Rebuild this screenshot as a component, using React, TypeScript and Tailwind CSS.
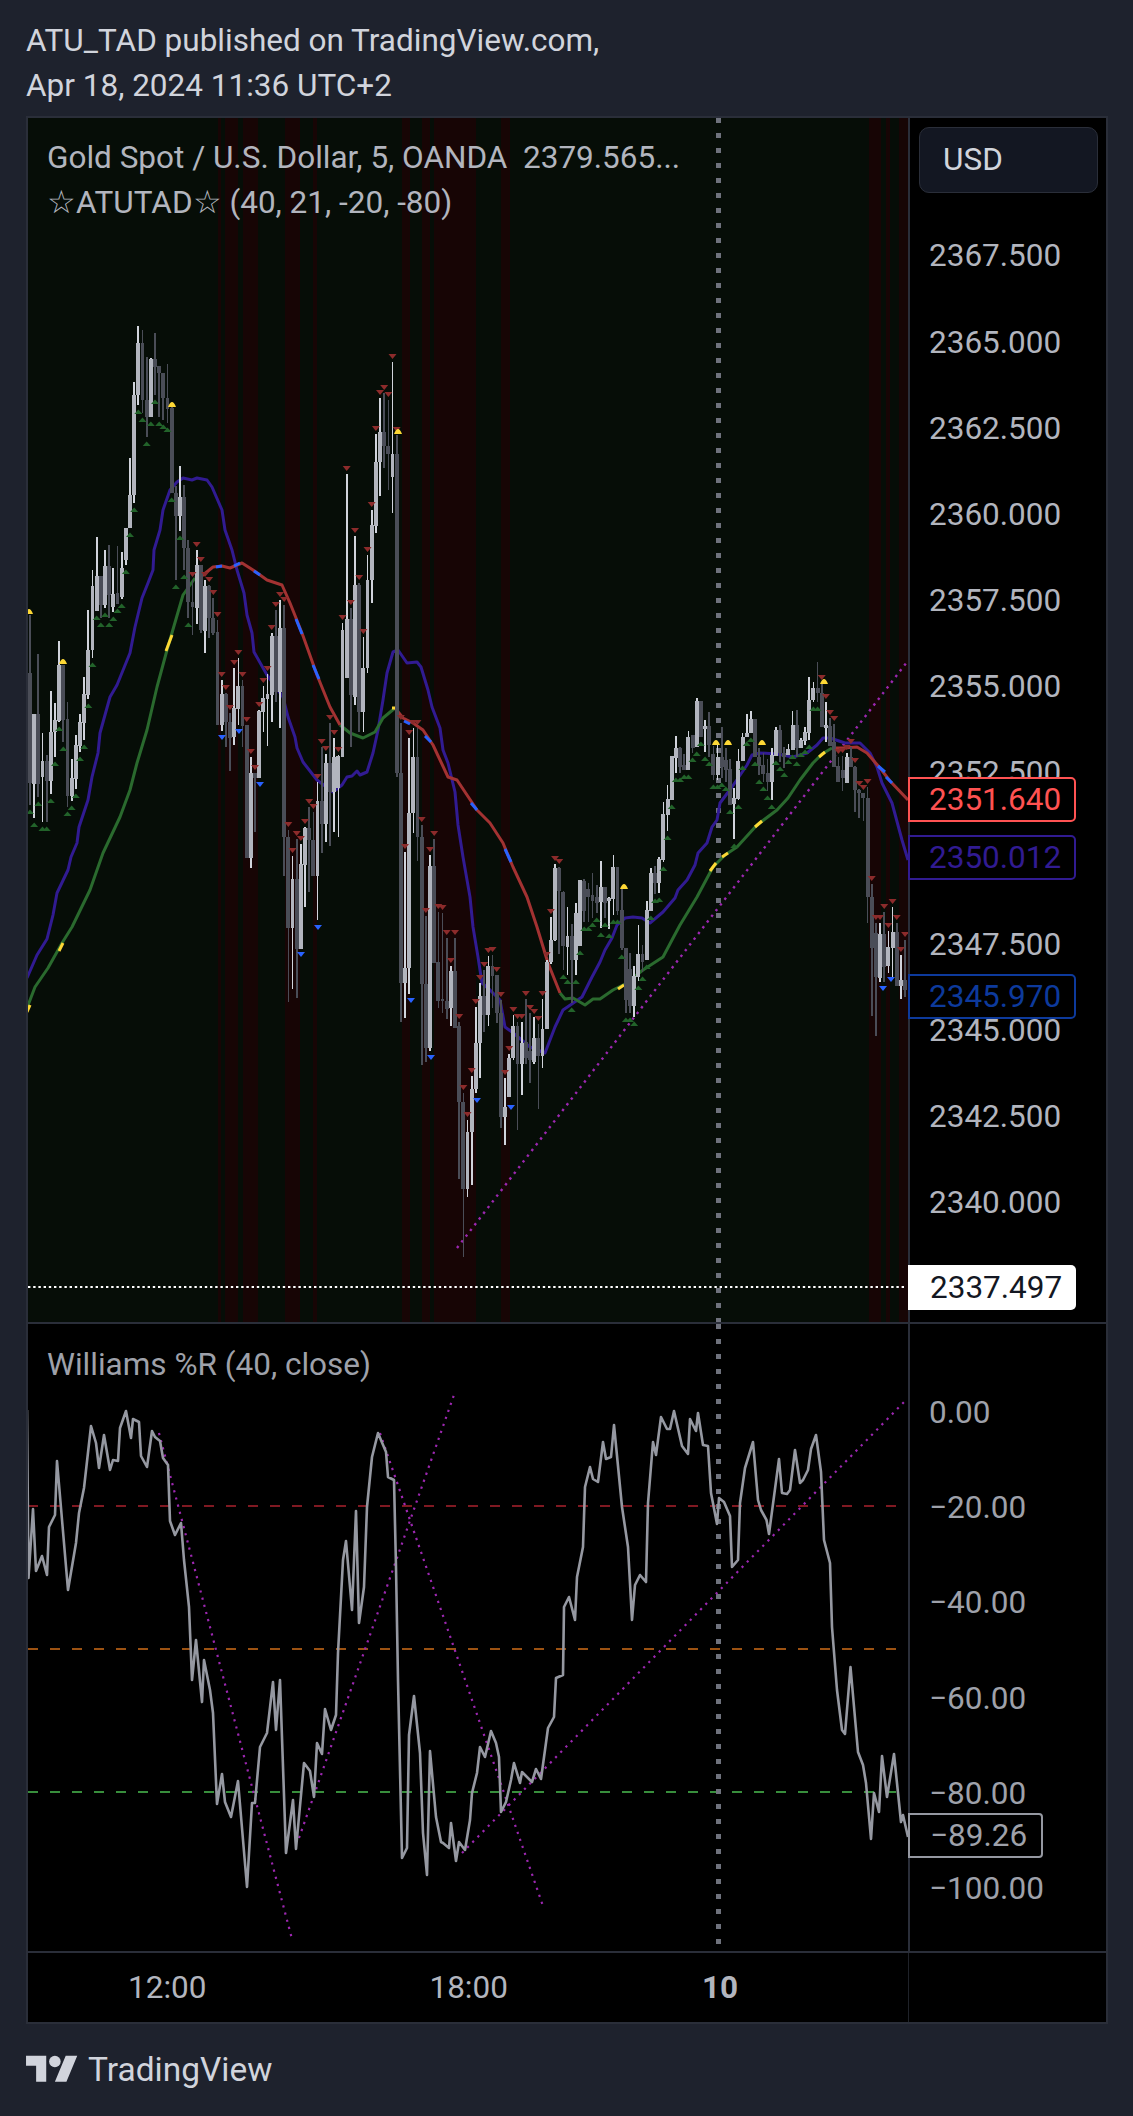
import React from 'react'

// [high, bodyTop, bodyBottom, low, up] in page pixels, one entry per bar
const candles: number[][] = [
  [615,673,783,805,0],[714,714,784,818,1],[654,714,784,797,0],[733,761,777,822,1],[755,761,781,822,0],[691,732,781,794,1],
  [703,720,732,757,1],[641,665,721,722,1],[665,665,720,742,0],[702,719,796,807,0],[759,778,796,801,1],[735,745,779,789,1],
  [714,722,746,752,1],[677,694,723,740,1],[610,650,695,699,1],[570,586,650,658,1],[537,576,611,611,1],[576,576,605,618,0],
  [550,566,605,608,1],[545,566,595,618,0],[568,594,607,612,1],[546,593,604,604,0],[552,568,597,599,1],[528,528,560,565,1],
  [458,495,528,528,1],[382,395,495,503,1],[326,343,395,405,1],[330,343,400,413,0],[357,400,417,437,0],[358,359,417,417,1],
  [333,359,367,395,0],[366,366,373,417,0],[373,373,398,420,0],[364,398,409,423,0],[407,408,493,493,0],[486,493,516,580,0],
  [466,497,516,531,1],[485,497,548,570,0],[540,548,602,618,0],[580,602,607,635,0],[550,565,608,624,1],[565,565,630,633,0],
  [580,586,631,653,1],[585,586,618,638,0],[598,618,633,635,0],[620,632,725,725,0],[680,694,725,731,1],[693,694,722,747,0],
  [713,722,738,771,0],[668,708,737,745,1],[658,686,709,725,1],[680,686,726,747,0],[725,725,858,858,0],[757,773,858,868,1],
  [773,773,778,832,0],[710,711,778,778,1],[686,698,712,732,1],[674,694,699,746,1],[633,636,695,722,1],[610,636,692,702,0],
  [600,628,692,728,1],[605,628,837,876,0],[830,837,928,1002,0],[856,879,928,989,1],[839,879,949,998,0],[844,864,949,949,1],
  [827,828,865,907,1],[807,828,840,892,0],[812,840,876,876,0],[782,801,876,920,1],[747,801,824,853,0],[754,763,824,842,1],
  [723,763,792,846,0],[738,757,792,832,1],[755,756,788,837,1],[623,630,757,757,1],[474,619,678,678,1],[608,619,695,747,0],
  [536,585,697,705,1],[583,585,712,732,0],[637,668,712,732,1],[555,580,668,673,1],[510,525,580,603,1],[434,462,526,533,1],
  [398,432,462,496,1],[393,432,446,468,0],[400,446,454,490,0],[362,454,477,513,1],[435,454,773,777,0],[723,773,983,1022,0],
  [852,968,983,1018,1],[738,813,968,994,1],[728,757,813,833,1],[728,757,837,861,0],[825,837,984,1065,0],[916,984,1048,1062,0],
  [855,866,1048,1051,1],[839,866,963,963,0],[912,962,1001,1008,0],[913,999,1001,1013,0],[938,1001,1009,1019,0],[966,971,1008,1026,1],
  [938,971,1028,1028,0],[1022,1026,1102,1179,0],[1093,1102,1189,1257,0],[1120,1132,1189,1197,1],[1076,1089,1132,1185,1],[1007,1043,1089,1093,1],
  [983,996,1043,1078,1],[970,996,1015,1032,0],[956,966,1015,1026,1],[955,966,976,1008,0],[975,975,1013,1023,0],[1000,1013,1117,1128,0],
  [1078,1107,1117,1145,1],[1054,1058,1097,1097,1],[1015,1026,1058,1060,1],[1022,1026,1064,1130,0],[1022,1043,1064,1095,1],[999,1042,1058,1064,0],
  [1013,1051,1060,1083,0],[1017,1038,1062,1064,1],[1024,1038,1056,1109,0],[999,1029,1056,1068,1],[960,962,1029,1029,1],[917,940,962,964,1],
  [864,868,940,941,1],[867,868,891,954,0],[891,892,946,970,0],[907,936,947,975,1],[924,936,960,1003,0],[903,913,960,975,1],
  [880,880,946,946,1],[879,881,911,922,0],[883,889,897,922,0],[873,895,901,918,0],[885,897,903,913,0],[861,887,902,928,1],
  [887,887,903,918,0],[897,898,901,929,1],[855,867,899,915,1],[867,867,911,915,0],[889,910,948,950,0],[948,948,1000,1013,0],
  [953,969,1006,1013,0],[966,976,1006,1017,1],[925,954,977,981,1],[945,954,962,972,0],[901,910,960,960,1],[868,873,911,911,1],
  [866,873,883,894,0],[857,859,883,893,1],[802,814,860,862,1],[785,799,815,831,1],[756,756,800,800,1],[736,748,758,773,1],
  [747,748,767,773,0],[754,765,770,770,0],[731,737,770,770,1],[735,735,748,753,0],[698,701,747,747,1],[701,701,737,737,0],
  [720,726,729,752,1],[712,726,745,757,0],[746,754,775,780,0],[745,757,775,780,1],[727,757,767,778,0],[748,760,770,782,0],
  [759,769,805,805,0],[788,798,804,839,1],[749,761,799,800,1],[733,737,761,761,1],[714,733,737,737,1],[711,719,733,733,1],
  [719,719,757,757,0],[748,757,766,775,0],[753,765,774,782,0],[759,773,782,791,0],[748,755,782,800,1],[727,730,756,756,1],
  [725,730,753,762,0],[747,753,757,768,0],[744,749,755,755,1],[711,725,750,750,1],[710,725,748,757,0],[738,740,748,748,1],
  [727,732,741,745,1],[677,700,733,740,1],[682,688,700,702,1],[662,688,693,702,0],[683,693,727,727,0],[702,725,728,742,1],
  [718,726,746,746,0],[724,742,767,767,0],[757,766,782,782,0],[756,770,778,791,0],[753,757,783,783,1],[747,757,767,767,0],
  [766,767,790,812,0],[789,790,793,818,0],[793,793,798,821,0],[787,798,897,923,0],[884,897,948,1016,0],[923,933,977,1036,0],
  [923,934,978,982,1],[912,934,967,982,0],[931,947,966,973,1],[907,932,948,978,1],[923,932,986,986,0],[955,980,986,999,1],
  [940,980,990,997,0],
]

const redBands = [
  [218,221],[225,238],[243,258],[285,300],[313,317],[402,410],[422,430],[434,476],[501,510],[869,881],[886,890],[899,908],
]

const slowMa =
  '27,978 37,955 47,939 53,915 57,893 68,870 71,857 77,843 79,827 88,800 92,777 98,753 100,733 110,697 117,685 130,653 135,627 142,598 148,583 153,570 154,550 160,530 163,510 170,490 177,482 183,478 192,480 197,478 207,480 212,487 222,510 225,530 232,550 237,570 244,593 247,615 252,633 254,652 267,675 283,697 288,717 295,737 297,748 303,762 317,780 333,792 342,785 347,777 352,776 357,771 360,775 367,772 373,753 378,730 383,700 387,673 393,652 398,650 407,663 417,662 421,667 428,690 432,707 440,728 443,750 448,763 455,792 458,825 463,857 470,897 473,927 478,957 482,983 490,990 500,1000 505,1027 512,1032 530,1047 545,1053 555,1027 563,1010 582,997 592,977 600,962 605,950 612,938 617,925 625,918 633,917 642,918 650,923 663,912 675,898 678,890 687,880 695,865 698,853 707,843 712,827 717,820 720,803 732,787 747,765 752,755 760,753 777,754 793,757 807,753 817,745 823,738 830,738 845,743 860,743 870,753 877,767 882,783 892,803 902,840 908,860'

const fastGreen = [
  '27,1008 35,987 48,968 62,943 72,927 90,890 103,853 120,817 130,790 137,763 147,730 157,687 167,650 183,595 195,578',
  '340,725 350,733 363,738 375,732 383,718 395,708',
  '560,993 565,999 573,998 585,1005 593,999 600,999 613,990 625,984 643,970 663,957 672,940 680,925 697,897 713,867 725,855 737,847 757,825 777,810 788,798 800,780 813,763 822,754 832,748',
]
const fastRed = [
  '195,578 203,575 213,567 222,566 230,568 242,563 253,570 267,580 282,585 290,603 302,633 317,675 330,707 340,725',
  '395,708 403,718 413,723 423,730 433,745 448,777 457,780 467,795 477,810 490,823 503,843 513,867 527,897 537,927 548,963 560,993',
  '832,748 843,748 857,747 867,753 880,768 890,781 908,800',
]
const yellowMarks = [
  [27,1012,30,1005],[59,951,63,943],[166,651,172,635],[392,708,397,708],[618,989,624,985],[710,871,716,863],[722,857,728,853],[755,827,762,821],[819,757,825,752],
]
const blueMarks = [
  [216,567,222,566],[234,566,240,563],[254,571,260,575],[296,619,302,634],[313,665,319,679],[404,721,410,724],[425,736,431,742],[471,803,477,810],[505,849,511,862],[878,766,885,772],[886,777,892,783],
]
const yellowTips = [
  [29,612],[63,662],[172,405],[398,432],[624,887],[716,743],[728,743],[762,743],[824,682],
]
const blueTips = [
  [222,737],[239,731],[260,784],[301,954],[318,927],[411,1000],[431,1057],[477,1100],[511,1107],[883,988],[891,979],
]

const williams =
  '27,1410 28.5,1578 33,1509 36,1571 42,1556 47,1575 49,1527 55,1515 57,1461 68,1590 76,1543 79,1513 84,1488 91,1426 96,1443 99,1468 104,1435 110,1470 113,1460 118,1461 120,1428 126,1411 131,1438 133,1419 139,1422 141,1456 147,1467 152,1431 155,1437 160,1441 163,1458 168,1465 170,1521 175,1535 181,1523 184,1560 189,1607 192,1680 196,1640 202,1702 204,1660 210,1690 213,1713 217,1804 222,1774 225,1802 231,1817 238,1781 247,1887 252,1803 255,1803 260,1747 267,1733 273,1682 276,1730 280,1680 286,1853 293,1800 296,1849 304,1763 310,1771 314,1797 317,1743 322,1754 325,1709 331,1730 336,1715 338,1653 343,1560 346,1541 352,1610 356,1511 359,1623 364,1587 367,1507 372,1457 378,1433 386,1452 388,1477 394,1480 396,1567 398,1680 402,1858 407,1848 409,1735 414,1696 420,1753 423,1833 427,1875 430,1751 436,1817 441,1842 443,1843 449,1848 451,1823 456,1861 459,1842 465,1850 470,1820 472,1793 477,1773 480,1747 485,1757 491,1731 496,1743 499,1757 501,1812 506,1802 511,1780 514,1763 520,1783 522,1772 532,1782 536,1769 541,1779 545,1750 548,1728 554,1717 556,1678 563,1675 564,1607 569,1597 575,1620 577,1577 583,1547 585,1487 590,1467 593,1479 598,1482 603,1442 606,1459 611,1457 614,1425 622,1507 628,1547 632,1620 635,1585 640,1575 646,1582 648,1503 653,1442 656,1455 661,1417 667,1429 670,1429 674,1411 682,1446 688,1454 690,1419 696,1431 698,1413 703,1445 708,1446 711,1493 717,1524 719,1498 724,1502 730,1516 732,1567 738,1560 740,1503 745,1468 753,1442 758,1500 761,1510 766.5,1520 769,1534 779,1459 782,1493 787,1494 790,1490 795,1450 800,1483 803,1480 808,1470 811,1449 816,1435 821,1472 824,1540 830,1563 832,1627 837,1690 842,1730 845,1734 850.5,1667 858,1752 863,1765 866,1783 871,1839 874,1793 879,1812 882,1756 887,1797 894,1754 901,1822 903,1815 908,1837'

const priceTicks = ['2367.500', '2365.000', '2362.500', '2360.000', '2357.500', '2355.000', '2352.500', '2350.000', '2347.500', '2345.000', '2342.500', '2340.000']
const wprTicks = ['0.00', '−20.00', '−40.00', '−60.00', '−80.00', '−100.00']

const barX = (i: number) => 30 + i * 4.167

function Bars() {
  return (
    <g shapeRendering="crispEdges">
      {candles.map(([hi, top, bot, lo, up], i) => {
        const x = barX(i)
        return (
          <g key={i}>
            <rect x={x - 0.85} y={hi} width={1.7} height={lo - hi} fill={up ? '#d1d4dc' : '#4a4d57'} />
            <rect x={x - 1.95} y={top} width={3.9} height={Math.max(bot - top, 2)} fill={up ? '#b2b5be' : '#4a4d57'} />
          </g>
        )
      })}
    </g>
  )
}

function Markers() {
  return (
    <g>
      {candles.map(([hi, , , lo], i) => {
        const x = barX(i)
        if (i <= 38 || (i >= 128 && i <= 189)) {
          return <path key={i} d={`M${x - 4} ${lo + 9}L${x} ${lo + 4.5}L${x + 4} ${lo + 9}Z`} fill="#22632a" />
        }
        return <path key={i} d={`M${x - 4} ${hi - 8}L${x + 4} ${hi - 8}L${x} ${hi - 3}Z`} fill="#8c2b2b" />
      })}
      {yellowTips.map(([x, y], i) => (
        <path key={i} d={`M${x - 4} ${y + 2}Q${x - 2} ${y - 3} ${x} ${y - 3}Q${x + 2} ${y - 3} ${x + 4} ${y + 2}Z`} fill="#fdd835" />
      ))}
      {blueTips.map(([x, y], i) => (
        <path key={i} d={`M${x - 4} ${y - 2}L${x + 4} ${y - 2}L${x} ${y + 3}Z`} fill="#2962ff" />
      ))}
    </g>
  )
}

function MainChart() {
  return (
    <svg width={880} height={1204} viewBox="28 118 880 1204" className="block">
      {redBands.map(([a, b]) => (
        <rect key={a} x={a} y={118} width={b - a} height={1204} fill="#170505" />
      ))}
      <line x1={718.5} y1={118} x2={718.5} y2={1322} stroke="#6f727d" strokeWidth={5} strokeDasharray="5 10" />
      <line x1={457} y1={1248} x2={907} y2={662} stroke="#9c27b0" strokeWidth={2.4} strokeDasharray="2.4 4.8" />
      <polyline points={slowMa} fill="none" stroke="#311b92" strokeWidth={3} strokeLinejoin="round" />
      {fastGreen.map((p) => (
        <polyline key={p} points={p} fill="none" stroke="#2a6a2e" strokeWidth={3} strokeLinejoin="round" />
      ))}
      {fastRed.map((p) => (
        <polyline key={p} points={p} fill="none" stroke="#a33232" strokeWidth={3} strokeLinejoin="round" />
      ))}
      {yellowMarks.map(([a, b, c, d]) => (
        <line key={a} x1={a} y1={b} x2={c} y2={d} stroke="#fdd835" strokeWidth={3} />
      ))}
      {blueMarks.map(([a, b, c, d]) => (
        <line key={a} x1={a} y1={b} x2={c} y2={d} stroke="#2962ff" strokeWidth={3} />
      ))}
      <Bars />
      <Markers />
      <line x1={28} y1={1287} x2={906} y2={1287} stroke="#ffffff" strokeWidth={2} strokeDasharray="2.4 2.8" />
    </svg>
  )
}

function WilliamsChart() {
  return (
    <svg width={880} height={627} viewBox="28 1324 880 627" className="block">
      <line x1={28} y1={1506} x2={908} y2={1506} stroke="#801922" strokeWidth={2} strokeDasharray="10 12" />
      <line x1={28} y1={1649} x2={908} y2={1649} stroke="#9c5212" strokeWidth={2} strokeDasharray="10 12" />
      <line x1={28} y1={1792} x2={908} y2={1792} stroke="#388e3c" strokeWidth={2} strokeDasharray="10 12" />
      <line x1={718.5} y1={1324} x2={718.5} y2={1946} stroke="#6f727d" strokeWidth={5} strokeDasharray="5 10" />
      <g stroke="#9c27b0" strokeWidth={2.2} strokeDasharray="2.2 5.2" fill="none">
        <line x1={159} y1={1433} x2={292} y2={1939} />
        <line x1={299} y1={1838} x2={455} y2={1392} />
        <line x1={380} y1={1433} x2={543} y2={1906} />
        <line x1={462} y1={1853} x2={907} y2={1399} />
      </g>
      <polyline points={williams} fill="none" stroke="#9598a1" strokeWidth={2.6} strokeLinejoin="round" />
    </svg>
  )
}

export default function App() {
  return (
    <div className="w-[1133px] h-[2116px] overflow-hidden bg-[#1e222d] [font-family:Roboto,sans-serif]">
      <header className="pl-[26px] pt-[18px] h-[116px] text-[31.5px] leading-[45px] text-[#d1d4dc]">
        <div>ATU_TAD published on TradingView.com,</div>
        <div>Apr 18, 2024 11:36 UTC+2</div>
      </header>

      <div className="ml-[26px] w-[1082px] border-2 border-[#2a2e39] bg-black">
        <div className="flex h-[1204px]">
          <div className="relative w-[880px] bg-[#060d07]">
            <MainChart />
            <div className="absolute left-[19px] top-[17px] text-[31.5px] leading-[45px] text-[#b2b5be]">
              <div className="whitespace-pre">Gold Spot / U.S. Dollar, 5, OANDA  2379.565...</div>
              <div>☆ATUTAD☆ (40, 21, -20, -80)</div>
            </div>
          </div>
          <div className="relative w-[198px] border-l-2 border-[#2a2e39] pt-[95px] pl-[19px] text-[31.5px] text-[#b2b5be]">
            {priceTicks.map((t) => (
              <div key={t} className="flex h-[86.1px] items-center">{t}</div>
            ))}
            <div className="absolute left-[9px] top-[9px] flex h-[66px] w-[179px] items-center rounded-[10px] border border-[#2a2e39] bg-[#131722] pl-[23px] text-[#d1d4dc]">
              USD
            </div>
            <div className="absolute -left-[2px] top-[659px] flex h-[45px] w-[168px] items-center rounded-r-[5px] border-[2.5px] border-[#ff5252] bg-black pl-[19px] pt-[1px] text-[#ff5252]">2351.640</div>
            <div className="absolute -left-[2px] top-[717px] flex h-[45px] w-[168px] items-center rounded-r-[5px] border-[2.5px] border-[#311b92] bg-black pl-[19px] pt-[1px] text-[#311b92]">2350.012</div>
            <div className="absolute -left-[2px] top-[856px] flex h-[45px] w-[168px] items-center rounded-r-[5px] border-[2.5px] border-[#0d3a9c] bg-black pl-[19px] pt-[1px] text-[#0d3a9c]">2345.970</div>
            <div className="absolute -left-[2px] top-[1147px] flex h-[45px] w-[168px] items-center rounded-r-[5px] bg-white pl-[22px] pt-[1px] text-[#131722]">2337.497</div>
          </div>
        </div>

        <div className="flex h-[629px] border-t-2 border-[#2a2e39]">
          <div className="relative w-[880px]">
            <WilliamsChart />
            <div className="absolute left-[19px] top-[18px] text-[31.5px] leading-[45px] text-[#9ea1aa]">Williams %R (40, close)</div>
          </div>
          <div className="relative w-[198px] border-l-2 border-[#2a2e39] pt-[41px] pl-[19px] text-[31.5px] text-[#9ea1aa]">
            {wprTicks.map((t) => (
              <div key={t} className="flex h-[95.2px] items-center">{t}</div>
            ))}
            <div className="absolute -left-[2px] top-[489px] flex h-[45px] w-[135px] items-center rounded-r-[4px] border-2 border-[#9598a1] bg-black pl-[20px] pt-[1px]">−89.26</div>
          </div>
        </div>

        <div className="flex h-[71px] border-t-2 border-[#2a2e39]">
          <div className="flex w-[880px] items-center text-[31.5px] text-[#b2b5be]">
            <span className="ml-[100px]">12:00</span>
            <span className="ml-[223px]">18:00</span>
            <span className="ml-[194px] font-bold">10</span>
          </div>
          <div className="w-[198px] border-l border-[#1f2229]" />
        </div>
      </div>

      <footer className="flex h-[92px] items-center pl-[26px] text-[#d1d4dc]">
        <svg width={52} height={40.4} viewBox="0 0 36 28" fill="currentColor">
          <path d="M14 22H7V11H0V4h14v18zM28 22h-8l7.5-18h8L28 22z" />
          <circle cx={20} cy={8} r={4} />
        </svg>
        <span className="ml-[10px] text-[33.5px] leading-none">TradingView</span>
      </footer>
    </div>
  )
}
